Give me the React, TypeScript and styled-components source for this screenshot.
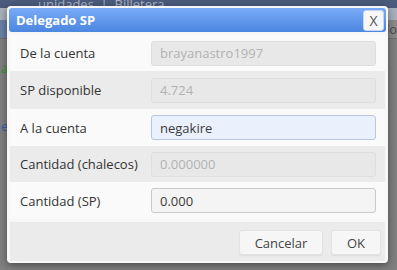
import React from "react";
import styled, { createGlobalStyle } from "styled-components";

const Global = createGlobalStyle`
  html, body { margin: 0; padding: 0; }
  body { width: 397px; height: 270px; overflow: hidden; font-family: "Open Sans", "Noto Sans", sans-serif; }
  * { box-sizing: border-box; }
`;

const Stage = styled.div`
  position: relative;
  width: 397px;
  height: 270px;
  overflow: hidden;
`;

const Backdrop = styled.div`
  display: flex;
  flex-direction: column;
  width: 100%;
  height: 100%;
  background: #878787;
`;

const NavBar = styled.div`
  height: 8px;
  background: #4c5c7d;
  display: flex;
  align-items: flex-end;
  padding-left: 38px;
  overflow: hidden;
  color: #aeb8c8;
  font-size: 13px;
  line-height: 8px;
  white-space: nowrap;
`;

const SubBar = styled.div`
  height: 12px;
  background: #a9b1bd;
`;

const TabBand = styled.div`
  height: 18px;
  background: linear-gradient(90deg, #6a82a6 0 8px, #8a8a8a 8px);
  display: flex;
  justify-content: flex-end;
  align-items: center;
  padding-right: 0;
  color: #4a4a4a;
  font-size: 13px;
`;

const Content = styled.div`
  flex: 1;
  border-top: 1px solid #6f6f6f;
  background: #808080;
  display: flex;
  flex-direction: column;
  padding-top: 22px;
  gap: 44px;
  font-size: 13px;
`;

const BgText = styled.span<{ $color: string }>`
  color: ${(p) => p.$color};
  padding-left: 1px;
  line-height: 14px;
`;

const Dialog = styled.div`
  position: absolute;
  top: 6px;
  left: 7px;
  width: 381px;
  height: 257px;
  background: #f7f7f7;
  border-radius: 4px;
  padding: 2px;
  display: flex;
  flex-direction: column;
  gap: 3px;
  box-shadow: 0 2px 8px rgba(0, 0, 0, 0.45);
`;

const TitleBar = styled.div`
  height: 25px;
  border-radius: 3px;
  background: linear-gradient(#79abf7, #4b86df);
  display: flex;
  align-items: center;
  justify-content: space-between;
  padding: 0 2px 0 7px;
`;

const Title = styled.span`
  color: #fff;
  font-weight: 700;
  font-size: 13px;
`;

const CloseButton = styled.button`
  width: 21px;
  height: 21px;
  padding: 0;
  background: #f7f7f7;
  border: 1px solid #c5d5ef;
  border-radius: 3px;
  color: #555;
  font-family: "Open Sans", sans-serif;
  font-size: 14px;
  line-height: 19px;
`;

const Body = styled.div`
  margin: 0 1px;
  display: flex;
  flex-direction: column;
`;

const Row = styled.div<{ $h: number; $shade: boolean }>`
  height: ${(p) => p.$h}px;
  display: grid;
  grid-template-columns: 131px 1fr;
  align-items: center;
  padding: 0 9px 0 10px;
  background: ${(p) => (p.$shade ? "#ebebeb" : "#fafafa")};
`;

const Label = styled.span`
  color: #333;
  font-size: 13px;
`;

const Field = styled.div<{ $variant: "disabled" | "focus" | "normal" }>`
  height: 25px;
  border-radius: 3px;
  padding: 0 8px;
  display: flex;
  align-items: center;
  font-size: 13px;
  border: 1px solid
    ${(p) =>
      p.$variant === "focus" ? "#b9c7dc" : p.$variant === "disabled" ? "#dedede" : "#c9c9c9"};
  background: ${(p) =>
    p.$variant === "focus" ? "#eaf1fd" : p.$variant === "disabled" ? "#e8e8e8" : "#f4f4f4"};
  color: ${(p) => (p.$variant === "disabled" ? "#b2b2b2" : "#3a3a3a")};
`;

const Footer = styled.div`
  margin: 0 1px;
  height: 40px;
  background: #ebebeb;
  display: flex;
  justify-content: flex-end;
  align-items: flex-start;
  gap: 8px;
  padding: 8px 4px 0 0;
`;

const Button = styled.button<{ $w: number }>`
  width: ${(p) => p.$w}px;
  height: 25px;
  background: #f6f6f6;
  border: 1px solid #e2e2e2;
  border-radius: 3px;
  color: #444;
  font-family: "Open Sans", sans-serif;
  font-size: 13px;
  box-shadow: 0 1px 1px rgba(0, 0, 0, 0.06);
`;

const rows: { label: string; value: string; variant: "disabled" | "focus" | "normal"; h: number; shade: boolean }[] = [
  { label: "De la cuenta", value: "brayanastro1997", variant: "disabled", h: 36, shade: false },
  { label: "SP disponible", value: "4.724", variant: "disabled", h: 38, shade: true },
  { label: "A la cuenta", value: "negakire", variant: "focus", h: 37, shade: false },
  { label: "Cantidad (chalecos)", value: "0.000000", variant: "disabled", h: 36, shade: true },
  { label: "Cantidad (SP)", value: "0.000", variant: "normal", h: 37, shade: false },
];

export default function App() {
  return (
    <>
      <Global />
      <Stage>
        <Backdrop>
          <NavBar>unidades &nbsp;|&nbsp; Billetera</NavBar>
          <SubBar />
          <TabBand>lo</TabBand>
          <Content>
            <BgText $color="#2f9a2f">a</BgText>
            <BgText $color="#3b5fb0">e</BgText>
          </Content>
        </Backdrop>
        <Dialog>
          <TitleBar>
            <Title>Delegado SP</Title>
            <CloseButton>X</CloseButton>
          </TitleBar>
          <Body>
            {rows.map((r) => (
              <Row key={r.label} $h={r.h} $shade={r.shade}>
                <Label>{r.label}</Label>
                <Field $variant={r.variant}>{r.value}</Field>
              </Row>
            ))}
          </Body>
          <Footer>
            <Button $w={84}>Cancelar</Button>
            <Button $w={50}>OK</Button>
          </Footer>
        </Dialog>
      </Stage>
    </>
  );
}
